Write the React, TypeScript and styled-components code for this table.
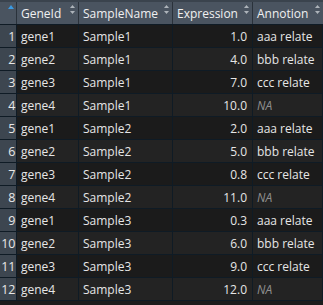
import * as React from 'react';
import styled, {createGlobalStyle} from 'styled-components';

const GlobalStyle = createGlobalStyle`
  body {
    margin: 0;
    background: #1c1c1c;
    font-family: "Open Sans", "Noto Sans", sans-serif;
    font-size: 12px;
    color: #e6e6e6;
  }
`;

type Rec = {gene: string; sample: string; expr: string; note: string | null};

const rows: Rec[] = [
  {gene: 'gene1', sample: 'Sample1', expr: '1.0', note: 'aaa relate'},
  {gene: 'gene2', sample: 'Sample1', expr: '4.0', note: 'bbb relate'},
  {gene: 'gene3', sample: 'Sample1', expr: '7.0', note: 'ccc relate'},
  {gene: 'gene4', sample: 'Sample1', expr: '10.0', note: null},
  {gene: 'gene1', sample: 'Sample2', expr: '2.0', note: 'aaa relate'},
  {gene: 'gene2', sample: 'Sample2', expr: '5.0', note: 'bbb relate'},
  {gene: 'gene3', sample: 'Sample2', expr: '0.8', note: 'ccc relate'},
  {gene: 'gene4', sample: 'Sample2', expr: '11.0', note: null},
  {gene: 'gene1', sample: 'Sample3', expr: '0.3', note: 'aaa relate'},
  {gene: 'gene2', sample: 'Sample3', expr: '6.0', note: 'bbb relate'},
  {gene: 'gene3', sample: 'Sample3', expr: '9.0', note: 'ccc relate'},
  {gene: 'gene4', sample: 'Sample3', expr: '12.0', note: null},
];

const COLS = '17px 62px 94px 80px 1fr';

const Grid = styled.div`
  width: 323px;
  background: #1c1c1c;
`;

const HeaderRow = styled.div`
  display: grid;
  grid-template-columns: ${COLS};
  height: 25px;
  background: #4a5460;
  border-top: 2px solid #3a434d;
  box-sizing: border-box;
  border-bottom: 1px solid #0f1b25;
`;

const HeadCell = styled.div<{$last?: boolean}>`
  position: relative;
  display: flex;
  align-items: center;
  padding-left: 4px;
  border-right: ${(p) => (p.$last ? 'none' : '1px solid #2a323b')};
  color: #f0f0f0;
  white-space: nowrap;
  overflow: hidden;
`;

const SortIcon = styled.svg`
  position: absolute;
  right: 3px;
  top: 3px;
`;

const SortedUp = styled.svg`
  position: absolute;
  left: 8px;
  top: 3px;
`;

const BodyRow = styled.div<{$alt: boolean}>`
  display: grid;
  grid-template-columns: ${COLS};
  height: 23px;
  box-sizing: border-box;
  border-bottom: 1px solid #0f1b25;
  background: ${(p) => (p.$alt ? '#232323' : '#1b1b1b')};
`;

const Cell = styled.div<{$right?: boolean}>`
  display: flex;
  align-items: center;
  justify-content: ${(p) => (p.$right ? 'flex-end' : 'flex-start')};
  padding: 0 ${(p) => (p.$right ? '5px' : '0')} 0 ${(p) => (p.$right ? '0' : '4px')};
  border-right: 1px solid #0f1b25;
  white-space: nowrap;
  overflow: hidden;
`;

const RowNum = styled.div`
  display: flex;
  align-items: center;
  justify-content: flex-end;
  padding-right: 1px;
  background: #3d4650;
  border-right: 1px solid #0f1b25;
  color: #e8e8e8;
  font-size: 12.5px;
  letter-spacing: -0.3px;
  white-space: nowrap;
`;

const Missing = styled.span`
  font-style: italic;
  color: #8f8f8f;
`;

const Sort = () => (
  <SortIcon width="5" height="9" viewBox="0 0 5 9">
    <path d="M2.5 0 L5 3 L0 3 Z" fill="#aeb4ba" />
    <path d="M2.5 9 L5 6 L0 6 Z" fill="#aeb4ba" />
  </SortIcon>
);

export default function App() {
  return (
    <>
      <GlobalStyle />
      <Grid>
        <HeaderRow>
          <HeadCell>
            <SortedUp width="6" height="4" viewBox="0 0 6 4">
              <path d="M3 0 L6 4 L0 4 Z" fill="#3b9ae1" />
            </SortedUp>
          </HeadCell>
          <HeadCell>
            GeneId
            <Sort />
          </HeadCell>
          <HeadCell>
            SampleName
            <Sort />
          </HeadCell>
          <HeadCell>
            Expression
            <Sort />
          </HeadCell>
          <HeadCell $last>
            Annotion
            <Sort />
          </HeadCell>
        </HeaderRow>
        {rows.map((r, i) => (
          <BodyRow key={i} $alt={i % 2 === 1}>
            <RowNum>{i + 1}</RowNum>
            <Cell>{r.gene}</Cell>
            <Cell>{r.sample}</Cell>
            <Cell $right>{r.expr}</Cell>
            <Cell>{r.note ?? <Missing>NA</Missing>}</Cell>
          </BodyRow>
        ))}
      </Grid>
    </>
  );
}
